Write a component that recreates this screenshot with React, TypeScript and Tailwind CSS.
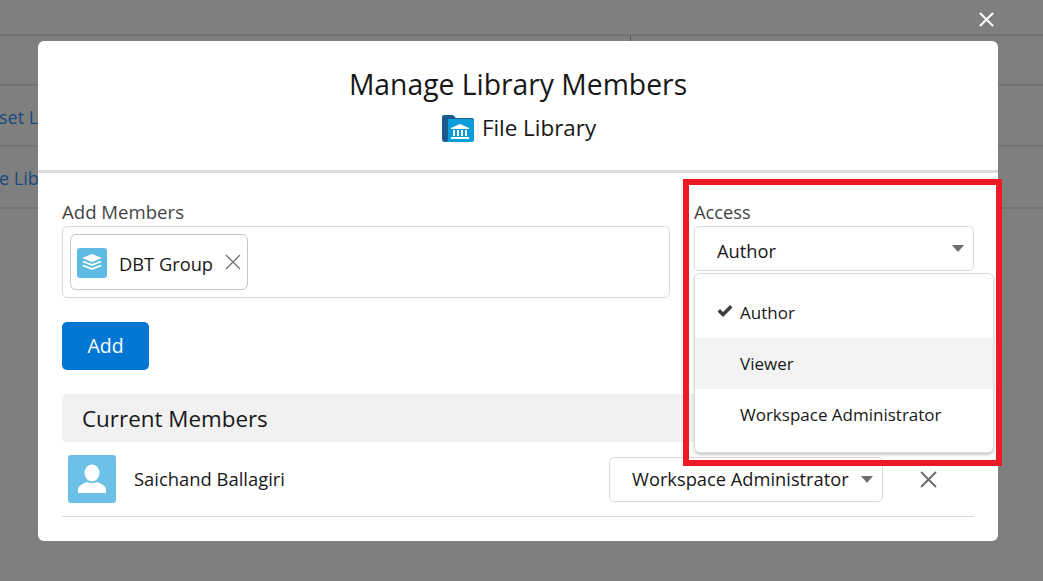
function Caret() {
  return (
    <svg width="14" height="9" viewBox="0 0 14 9" className="shrink-0">
      <path d="M1 1h12L7 8z" fill="#706e6b" />
    </svg>
  );
}

function Cross({ size, weight, className }: { size: number; weight: number; className: string }) {
  return (
    <svg width={size} height={size} viewBox="0 0 16 16" className={className}>
      <path d="M1 1L15 15M15 1L1 15" stroke="currentColor" strokeWidth={weight} fill="none" />
    </svg>
  );
}

function FolderIcon() {
  return (
    <svg width="32" height="28" viewBox="0 0 32 28" className="shrink-0">
      <path d="M0 3a2 2 0 0 1 2-2h9l3 3h16a2 2 0 0 1 2 2v4H0z" fill="#1b5a8e" />
      <path d="M0 3h6v25H3a3 3 0 0 1-3-3z" fill="#1b5a8e" />
      <path d="M6 5h24a2 2 0 0 1 2 2v19a2 2 0 0 1-2 2H3a3 3 0 0 0 3-3z" fill="#0d9dda" />
      <path d="M18 10l9 4v1H9v-1z" fill="#fff" />
      <path d="M11 16h2v6h-2zM15 16h2v6h-2zM19 16h2v6h-2zM23 16h2v6h-2zM9 23h18v2H9z" fill="#fff" />
    </svg>
  );
}

function GroupIcon() {
  return (
    <div className="mt-[2px] flex h-[30px] w-[30px] shrink-0 items-center justify-center rounded-[3px] bg-[#5ebbe3]">
      <svg width="22" height="20" viewBox="0 0 22 20">
        <path d="M11 1l10 4-10 4-10-4z" fill="#fff" />
        <path d="M3 8l8 3 8-3 2 1-10 4-10-4z" fill="#fff" />
        <path d="M3 12l8 3 8-3 2 1-10 4-10-4z" fill="#fff" />
      </svg>
    </div>
  );
}

function UserIcon() {
  return (
    <div className="flex h-12 w-12 shrink-0 items-center justify-center rounded-[3px] bg-[#6cc0e5]">
      <svg width="32" height="32" viewBox="0 0 32 32">
        <ellipse cx="16" cy="10" rx="7.5" ry="8.5" fill="#fff" />
        <path d="M2 30v-3c0-4 4-6 9-8 2 1.500 8 1.500 10 0 5 2 9 4 9 8v3z" fill="#fff" />
      </svg>
    </div>
  );
}

export default function App() {
  return (
    <div className="relative h-[581px] w-[1043px] overflow-hidden bg-[#807f7f] font-['Open_Sans',sans-serif]">
      {/* Page behind the overlay */}
      <div className="flex flex-col text-[18px] text-[#174a7c]">
        <div className="h-[36px] border-b-2 border-[#747373]" />
        <div className="h-[50px] border-b-2 border-[#747373]" />
        <div className="flex h-[61px] items-center border-b-2 border-[#747373] pt-[4px]">
          <span className="-ml-[1px]">set L</span>
        </div>
        <div className="flex h-[62px] items-center border-b-2 border-[#747373] pt-[2px]">
          <span className="-ml-[1px]">e Lib</span>
        </div>
      </div>
      <div className="absolute left-[630px] top-[36px] h-[5px] w-px bg-[#555555]" />

      <button className="absolute left-[979px] top-[12px] text-white">
        <Cross size={15} weight={2.2} className="block" />
      </button>

      {/* Modal */}
      <div className="absolute left-[38px] top-[41px] flex h-[500px] w-[960px] flex-col rounded-[6px] bg-white text-[#181818]">
        <div className="flex h-[132px] flex-col items-center border-b-[3px] border-[#dcdcdc] pt-[23px]">
          <h2 className="text-[28.300px] leading-[40px]">Manage Library Members</h2>
          <div className="mt-[8px] flex items-center gap-2 pl-[2px]">
            <FolderIcon />
            <span className="text-[22.400px] leading-[32px]">File Library</span>
          </div>
        </div>

        <div className="flex flex-col px-6">
          <div className="mt-[27px] flex items-start">
            <div className="w-[608px]">
              <div className="text-[18.600px] leading-[24px] text-[#444444]">Add Members</div>
              <div className="mt-[2px] flex h-[72px] items-center rounded-[5px] border border-[#dddbda] pl-[7px]">
                <div className="flex h-[56px] items-center rounded-[6px] border border-[#c9c7c5] pl-[6px] pr-[6px]">
                  <GroupIcon />
                  <span className="ml-3 pt-[4px] text-[18.300px]">DBT Group</span>
                  <Cross size={16} weight={1.2} className="ml-3 text-[#706e6b]" />
                </div>
              </div>
            </div>
            <div className="ml-6 w-[280px]">
              <div className="text-[18.300px] leading-[24px] text-[#444444]">Access</div>
              <div className="mt-[2px] flex h-[45px] items-center justify-between rounded-[5px] border border-[#dddbda] pl-[22px] pr-[8px]">
                <span className="pt-[4px] text-[18.300px]">Author</span>
                <Caret />
              </div>
            </div>
          </div>

          <button className="mt-[24px] h-12 w-[87px] rounded-[5px] bg-[#0176d3] text-[19.500px] text-white">Add</button>

          <div className="mt-[24px] flex h-12 items-center rounded-[5px] bg-[#f1f1f1] pl-5 pt-[2px] text-[22.400px]">Current Members</div>

          <div className="flex h-[75px] items-center border-b border-[#dddbda] pl-[6px]">
            <UserIcon />
            <span className="ml-[18px] text-[18.400px]">Saichand Ballagiri</span>
            <div className="ml-auto flex items-center">
              <div className="flex h-[45px] w-[274px] items-center justify-between rounded-[5px] border border-[#dddbda] pl-[22px] pr-[8px]">
                <span className="whitespace-nowrap text-[18.300px]">Workspace Administrator</span>
                <Caret />
              </div>
              <Cross size={17} weight={1.900} className="ml-[37px] mr-[37px] text-[#706e6b]" />
            </div>
          </div>
        </div>
      </div>

      {/* Open dropdown */}
      <div className="absolute left-[694px] top-[273px] w-[300px] rounded-[6px] border border-[#dddbda] bg-white pb-[12px] pt-[13px] text-[17px] text-[#181818] shadow-[0_2px_3px_rgba(0,0,0,0.2)]">
        <div className="relative flex h-[51px] items-center pl-[45px]">
          <svg width="16" height="14" viewBox="0 0 16 14" className="absolute left-[22px] top-[17px]">
            <path d="M0.500 7.500L3 5l3 3 7-7 2.500 2.500L6 13z" fill="#3e3e3c" />
          </svg>
          Author
        </div>
        <div className="flex h-[51px] items-center bg-[#f3f3f3] pl-[45px]">Viewer</div>
        <div className="flex h-[51px] items-center pl-[45px]">Workspace Administrator</div>
      </div>

      {/* Annotation frame */}
      <div className="pointer-events-none absolute left-[683px] top-[179px] h-[287px] w-[319px] border-[6px] border-[#ed1c24]" />
    </div>
  );
}
